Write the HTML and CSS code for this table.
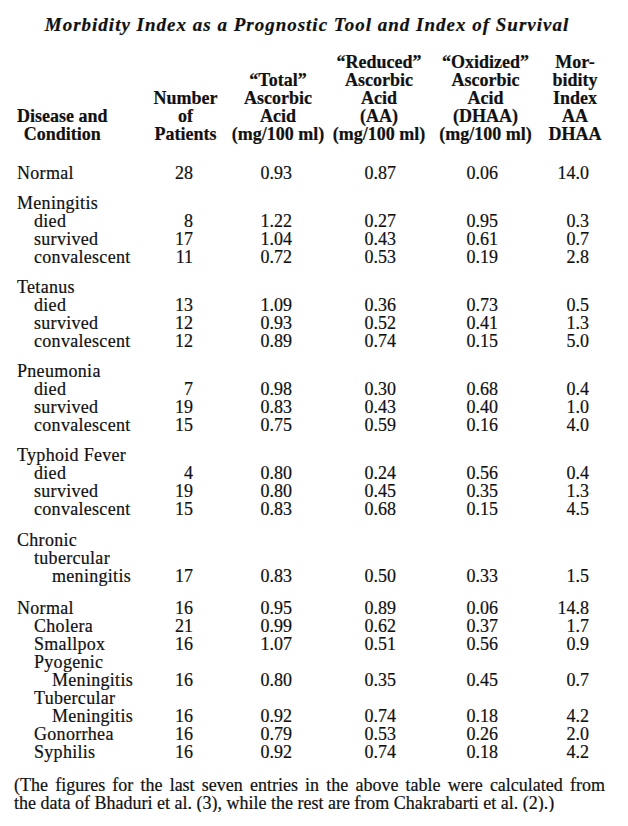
FILE: index.html
```html
<!DOCTYPE html>
<html>
<head>
<meta charset="utf-8">
<link rel="stylesheet" href="styles.css">
</head>
<body>
<div class="page">
  <h1 class="title">Morbidity Index as a Prognostic Tool and Index of Survival</h1>
  <div class="row head">
    <div class="hc1">Disease and<br>Condition</div>
    <div class="hc">Number<br>of<br>Patients</div>
    <div class="hc">“Total”<br>Ascorbic<br>Acid<br>(mg/100 ml)</div>
    <div class="hc">“Reduced”<br>Ascorbic<br>Acid<br>(AA)<br>(mg/100 ml)</div>
    <div class="hc">“Oxidized”<br>Ascorbic<br>Acid<br>(DHAA)<br>(mg/100 ml)</div>
    <div class="hc">Mor-<br>bidity<br>Index<br>AA<br>DHAA</div>
  </div>

  <div class="group first">
    <div class="row"><div class="c1">Normal</div><div class="n2">28</div><div class="n3">0.93</div><div class="n4">0.87</div><div class="n5">0.06</div><div class="n6">14.0</div></div>
  </div>

  <div class="group">
    <div class="row"><div class="c1">Meningitis</div></div>
    <div class="row"><div class="c1 i1">died</div><div class="n2">8</div><div class="n3">1.22</div><div class="n4">0.27</div><div class="n5">0.95</div><div class="n6">0.3</div></div>
    <div class="row"><div class="c1 i1">survived</div><div class="n2">17</div><div class="n3">1.04</div><div class="n4">0.43</div><div class="n5">0.61</div><div class="n6">0.7</div></div>
    <div class="row"><div class="c1 i1">convalescent</div><div class="n2">11</div><div class="n3">0.72</div><div class="n4">0.53</div><div class="n5">0.19</div><div class="n6">2.8</div></div>
  </div>

  <div class="group">
    <div class="row"><div class="c1">Tetanus</div></div>
    <div class="row"><div class="c1 i1">died</div><div class="n2">13</div><div class="n3">1.09</div><div class="n4">0.36</div><div class="n5">0.73</div><div class="n6">0.5</div></div>
    <div class="row"><div class="c1 i1">survived</div><div class="n2">12</div><div class="n3">0.93</div><div class="n4">0.52</div><div class="n5">0.41</div><div class="n6">1.3</div></div>
    <div class="row"><div class="c1 i1">convalescent</div><div class="n2">12</div><div class="n3">0.89</div><div class="n4">0.74</div><div class="n5">0.15</div><div class="n6">5.0</div></div>
  </div>

  <div class="group">
    <div class="row"><div class="c1">Pneumonia</div></div>
    <div class="row"><div class="c1 i1">died</div><div class="n2">7</div><div class="n3">0.98</div><div class="n4">0.30</div><div class="n5">0.68</div><div class="n6">0.4</div></div>
    <div class="row"><div class="c1 i1">survived</div><div class="n2">19</div><div class="n3">0.83</div><div class="n4">0.43</div><div class="n5">0.40</div><div class="n6">1.0</div></div>
    <div class="row"><div class="c1 i1">convalescent</div><div class="n2">15</div><div class="n3">0.75</div><div class="n4">0.59</div><div class="n5">0.16</div><div class="n6">4.0</div></div>
  </div>

  <div class="group">
    <div class="row"><div class="c1">Typhoid Fever</div></div>
    <div class="row"><div class="c1 i1">died</div><div class="n2">4</div><div class="n3">0.80</div><div class="n4">0.24</div><div class="n5">0.56</div><div class="n6">0.4</div></div>
    <div class="row"><div class="c1 i1">survived</div><div class="n2">19</div><div class="n3">0.80</div><div class="n4">0.45</div><div class="n5">0.35</div><div class="n6">1.3</div></div>
    <div class="row"><div class="c1 i1">convalescent</div><div class="n2">15</div><div class="n3">0.83</div><div class="n4">0.68</div><div class="n5">0.15</div><div class="n6">4.5</div></div>
  </div>

  <div class="group g13">
    <div class="row"><div class="c1">Chronic</div></div>
    <div class="row"><div class="c1 i1">tubercular</div></div>
    <div class="row"><div class="c1 i2">meningitis</div><div class="n2">17</div><div class="n3">0.83</div><div class="n4">0.50</div><div class="n5">0.33</div><div class="n6">1.5</div></div>
  </div>

  <div class="group g14">
    <div class="row"><div class="c1">Normal</div><div class="n2">16</div><div class="n3">0.95</div><div class="n4">0.89</div><div class="n5">0.06</div><div class="n6">14.8</div></div>
    <div class="row"><div class="c1 i1">Cholera</div><div class="n2">21</div><div class="n3">0.99</div><div class="n4">0.62</div><div class="n5">0.37</div><div class="n6">1.7</div></div>
    <div class="row"><div class="c1 i1">Smallpox</div><div class="n2">16</div><div class="n3">1.07</div><div class="n4">0.51</div><div class="n5">0.56</div><div class="n6">0.9</div></div>
    <div class="row"><div class="c1 i1">Pyogenic</div></div>
    <div class="row"><div class="c1 i2">Meningitis</div><div class="n2">16</div><div class="n3">0.80</div><div class="n4">0.35</div><div class="n5">0.45</div><div class="n6">0.7</div></div>
    <div class="row"><div class="c1 i1">Tubercular</div></div>
    <div class="row"><div class="c1 i2">Meningitis</div><div class="n2">16</div><div class="n3">0.92</div><div class="n4">0.74</div><div class="n5">0.18</div><div class="n6">4.2</div></div>
    <div class="row"><div class="c1 i1">Gonorrhea</div><div class="n2">16</div><div class="n3">0.79</div><div class="n4">0.53</div><div class="n5">0.26</div><div class="n6">2.0</div></div>
    <div class="row"><div class="c1 i1">Syphilis</div><div class="n2">16</div><div class="n3">0.92</div><div class="n4">0.74</div><div class="n5">0.18</div><div class="n6">4.2</div></div>
  </div>

  <p class="note"><span class="l1">(The figures for the last seven entries in the above table were calculated from</span><span class="l2">the data of Bhaduri et al. (3), while the rest are from Chakrabarti et al. (2).)</span></p>
</div>
</body>
</html>
```
FILE: styles.css
```css
html, body {
  margin: 0;
  padding: 0;
  background: #ffffff;
}
.page {
  width: 595px;
  padding: 14px 0 0 17px;
  color: #111111;
  font-family: "Liberation Serif", "Times New Roman", serif;
  font-size: 18px;
  line-height: 18px;
  -webkit-text-stroke: 0.2px #111111;
}
.title {
  margin: 0 15px 17px 0;
  font-size: 19px;
  line-height: 22px;
  font-weight: bold;
  font-style: italic;
  text-align: center;
  letter-spacing: 1px;
  white-space: nowrap;
}
.row {
  display: grid;
  grid-template-columns: 123px 91px 94px 108px 105px 74px;
  height: 18px;
}
.head {
  height: auto;
  align-items: end;
  font-weight: bold;
}
.hc1 {
  justify-self: start;
  text-align: center;
  white-space: nowrap;
}
.hc {
  justify-self: center;
  text-align: center;
  white-space: nowrap;
}
.c1 {
  white-space: nowrap;
  letter-spacing: 0.3px;
}
.i1 { padding-left: 17px; }
.i2 { padding-left: 35px; }
.group { margin-top: 12px; }
.group.first { margin-top: 21px; }
.group.g13 { margin-top: 13px; }
.group.g14 { margin-top: 14px; }
.n2, .n3, .n4, .n5, .n6 { text-align: right; }
.n2 { padding-right: 38px; }
.n3 { padding-right: 33px; }
.n4 { padding-right: 37px; }
.n5 { padding-right: 40px; }
.n6 { padding-right: 23px; }
.note {
  margin: 15px 0 0 -3px;
  width: 591px;
}
.l1 {
  display: block;
  white-space: nowrap;
  text-align: justify;
  text-align-last: justify;
}
.l2 {
  display: block;
  white-space: nowrap;
}
```
